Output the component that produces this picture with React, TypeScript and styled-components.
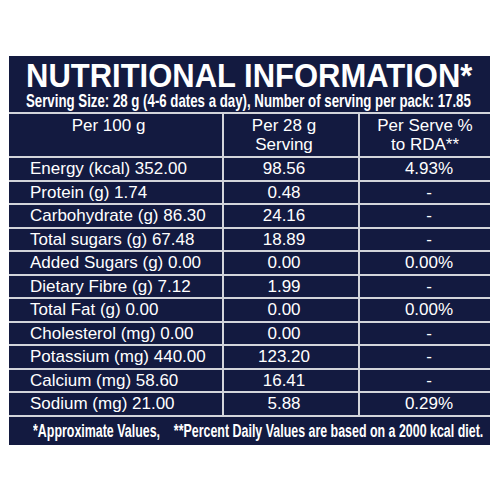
import React, { useLayoutEffect, useRef, useState } from 'react';
import styled, { createGlobalStyle } from 'styled-components';

interface INutrient {
  name: string;
  serving: string;
  rda: string;
}

const nutrients: INutrient[] = [
  { name: 'Energy (kcal) 352.00', serving: '98.56', rda: '4.93%' },
  { name: 'Protein (g) 1.74', serving: '0.48', rda: '-' },
  { name: 'Carbohydrate (g) 86.30', serving: '24.16', rda: '-' },
  { name: 'Total sugars (g) 67.48', serving: '18.89', rda: '-' },
  { name: 'Added Sugars (g) 0.00', serving: '0.00', rda: '0.00%' },
  { name: 'Dietary Fibre (g) 7.12', serving: '1.99', rda: '-' },
  { name: 'Total Fat (g) 0.00', serving: '0.00', rda: '0.00%' },
  { name: 'Cholesterol (mg) 0.00', serving: '0.00', rda: '-' },
  { name: 'Potassium (mg) 440.00', serving: '123.20', rda: '-' },
  { name: 'Calcium (mg) 58.60', serving: '16.41', rda: '-' },
  { name: 'Sodium (mg) 21.00', serving: '5.88', rda: '0.29%' },
];

const GlobalStyle = createGlobalStyle`
  html, body {
    margin: 0;
    background: #ffffff;
  }
`;

const Page = styled.div`
  padding: 56px 0 0 9px;
`;

const Panel = styled.div`
  width: 481px;
  background-color: #131a40;
  color: #ffffff;
  font-family: 'Liberation Sans', Arial, sans-serif;
  overflow: hidden;
`;

const TitleBlock = styled.div`
  height: 56px;
  padding-left: 17px;
  overflow: hidden;
`;

const Line = styled.div<{ size: number; lh: number; top: number }>`
  font-size: ${(p) => p.size}px;
  line-height: ${(p) => p.lh}px;
  margin-top: ${(p) => p.top}px;
  font-weight: bold;
  white-space: nowrap;
`;

const Squeeze = styled.span`
  display: inline-block;
  white-space: pre;
  transform-origin: left center;
`;

// squeeze a line into the width it takes in the picture (condensed face not installed)
const FitText: React.FC<{ width: number; children: React.ReactNode }> = ({ width, children }) => {
  const ref = useRef<HTMLSpanElement>(null);
  const [scale, setScale] = useState(1);
  useLayoutEffect(() => {
    if (ref.current) setScale(width / ref.current.offsetWidth);
  }, [width]);
  return (
    <Squeeze ref={ref} style={{ transform: `scaleX(${scale})` }}>
      {children}
    </Squeeze>
  );
};

const Grid = styled.div`
  display: grid;
  grid-template-columns: 213px 134px 130px;
  grid-template-rows: 42px repeat(11, 21.5px);
  gap: 2px;
  padding: 2px 0;
  background-color: #d2d4da;
`;

const Cell = styled.div<{ shift?: number }>`
  background-color: #131a40;
  font-size: 17px;
  line-height: 19px;
  display: flex;
  align-items: center;
  justify-content: center;
  padding-left: ${(p) => (p.shift && p.shift > 0 ? p.shift : 0)}px;
  padding-right: ${(p) => (p.shift && p.shift < 0 ? -p.shift : 0)}px;
`;

const NameCell = styled(Cell)`
  justify-content: flex-start;
  padding-left: 21px;
`;

const HeadCell = styled(Cell)`
  align-items: flex-start;
  text-align: center;
  padding-top: 2px;
`;

const Footer = styled.div`
  height: 28px;
  padding-left: 24px;
  display: flex;
  align-items: center;
`;

const App: React.FC = () => (
  <Page>
    <GlobalStyle />
    <Panel>
      <TitleBlock>
        <Line size={33} lh={32} top={4}>
          <FitText width={446}>NUTRITIONAL INFORMATION*</FitText>
        </Line>
        <Line size={19} lh={20} top={-1}>
          <FitText width={445}>Serving Size: 28 g (4-6 dates a day), Number of serving per pack: 17.85</FitText>
        </Line>
      </TitleBlock>
      <Grid>
        <HeadCell shift={-14}>Per 100 g</HeadCell>
        <HeadCell shift={-14}>
          Per 28 g
          <br />
          Serving
        </HeadCell>
        <HeadCell>
          Per Serve %
          <br />
          to RDA**
        </HeadCell>
        {nutrients.map((n) => (
          <React.Fragment key={n.name}>
            <NameCell>{n.name}</NameCell>
            <Cell shift={-14}>{n.serving}</Cell>
            <Cell shift={8}>{n.rda}</Cell>
          </React.Fragment>
        ))}
      </Grid>
      <Footer>
        <Line size={18} lh={20} top={0}>
          <FitText width={450}>{'*Approximate Values,    **Percent Daily Values are based on a 2000 kcal diet.'}</FitText>
        </Line>
      </Footer>
    </Panel>
  </Page>
);

export default App;
